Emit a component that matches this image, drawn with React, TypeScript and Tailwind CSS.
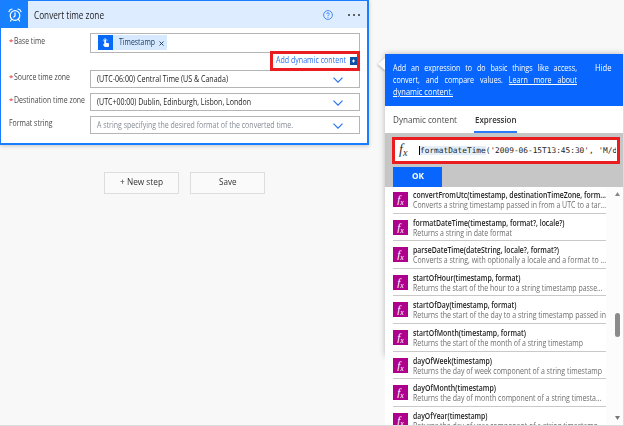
import React, { useLayoutEffect, useRef } from "react";

const functions = [
  { name: "convertFromUtc(timestamp, destinationTimeZone, form...", nameWidth: 193, text: "Converts a string timestamp passed in from a UTC to a tar...", textWidth: 193 },
  { name: "formatDateTime(timestamp, format?, locale?)", nameWidth: 151.5, text: "Returns a string in date format", textWidth: 99 },
  { name: "parseDateTime(dateString, locale?, format?)", nameWidth: 146, text: "Converts a string, with optionally a locale and a format to ...", textWidth: 193 },
  { name: "startOfHour(timestamp, format)", nameWidth: 107.5, text: "Returns the start of the hour to a string timestamp passe...", textWidth: 189.5 },
  { name: "startOfDay(timestamp, format)", nameWidth: 103.5, text: "Returns the start of the day to a string timestamp passed in", textWidth: 193 },
  { name: "startOfMonth(timestamp, format)", nameWidth: 113, text: "Returns the start of the month of a string timestamp", textWidth: 170 },
  { name: "dayOfWeek(timestamp)", nameWidth: 79, text: "Returns the day of week component of a string timestamp", textWidth: 189 },
  { name: "dayOfMonth(timestamp)", nameWidth: 83, text: "Returns the day of month component of a string timesta...", textWidth: 188.5 },
  { name: "dayOfYear(timestamp)", nameWidth: 74.5, text: "Returns the day of year component of a string timestamp", textWidth: 185 },
];

/* Condenses a single line of text to a given width. */
function Fit({ w, className = "", children }: { w: number; className?: string; children: React.ReactNode }) {
  const ref = useRef<HTMLSpanElement>(null);
  useLayoutEffect(() => {
    const el = ref.current;
    if (!el) return;
    el.style.transform = "none";
    el.style.transform = `scaleX(${w / el.getBoundingClientRect().width})`;
  }, [w]);
  return (
    <span className={`flex shrink-0 ${className}`} style={{ width: w }}>
      <span ref={ref} className="block shrink-0 origin-left whitespace-nowrap">{children}</span>
    </span>
  );
}

function Fx({ className }: { className: string }) {
  return (
    <span className={`font-['Liberation_Serif',serif] italic leading-none ${className}`}>
      f<sub className="relative bottom-[-2px] text-[0.72em] leading-none">x</sub>
    </span>
  );
}

function Label({ required, w, children }: { required?: boolean; w: number; children: React.ReactNode }) {
  return (
    <div className="flex w-[81px] shrink-0 text-[8.8px] leading-[12px] text-[#484848]">
      {required && <span className="w-[4.5px] text-[8px] text-[#e5262b]">*</span>}
      <Fit w={w}>{children}</Fit>
    </div>
  );
}

interface SelectRowProps {
  label: string;
  labelWidth: number;
  value: string;
  valueWidth: number;
  required?: boolean;
  placeholder?: boolean;
}

function SelectRow({ label, labelWidth, value, valueWidth, required, placeholder }: SelectRowProps) {
  return (
    <div className="flex h-[18px] items-center">
      <div className="pb-[4px]"><Label required={required} w={labelWidth}>{label}</Label></div>
      <div className={`flex h-[18px] w-[270px] items-center justify-between border border-[#b5b5b5] bg-white pt-px pl-[6px] pr-[16px] text-[8.8px] ${placeholder ? "text-[#858c95]" : "text-[#222]"}`}>
        <Fit w={valueWidth}>{value}</Fit>
        <svg className="h-[6px] w-[10px]" viewBox="0 0 10 6" fill="none" stroke="#2b76ee" strokeWidth="1.2">
          <path d="M.5.7 5 5.2 9.5.7" />
        </svg>
      </div>
    </div>
  );
}

export default function App() {
  return (
    <div className="flex h-[426px] w-[624px] items-start overflow-hidden border-b border-[#dcdcdc] bg-[#f8f8f8] font-['Open_Sans','Noto_Sans',sans-serif]">
      <main className="w-[369px] shrink-0">
        <section className="h-[145px] border-2 border-t border-l border-[#1a7dff] bg-white shadow-[0_1px_4px_#0003]">
          <header className="flex h-[27px] items-center bg-[#deecff]">
            <div className="flex h-[27px] w-[27px] items-center justify-center bg-[#1780ff]">
              <svg className="h-[14px] w-[14px]" viewBox="0 0 14 14" fill="none" stroke="white" strokeWidth="1.2" strokeLinecap="round">
                <circle cx="7" cy="7.5" r="4.8" />
                <path d="M7 4.8v3.1L5.8 9M1 3.7A3.5 3.5 0 0 1 4 1M10 1a3.5 3.5 0 0 1 3 2.7M3.5 11.5 2.5 13M10.5 11.5l1 1.5" />
              </svg>
            </div>
            <h1 className="ml-[6px] flex-1 pt-px text-[10px] text-[#222]"><Fit w={70}>Convert time zone</Fit></h1>
            <svg className="h-[10px] w-[10px]" viewBox="0 0 10 10" fill="none" stroke="#3981f4">
              <circle cx="5" cy="5" r="4.4" strokeWidth=".9" />
              <path d="M3.7 4c0-1.7 2.6-1.7 2.6 0C6.3 5 5 4.9 5 6.1M5 6.9v.8" strokeWidth=".9" />
            </svg>
            <div className="mr-[7px] ml-[15px] flex gap-[3px]">
              <i className="size-[2px] rounded-full bg-[#333]" />
              <i className="size-[2px] rounded-full bg-[#333]" />
              <i className="size-[2px] rounded-full bg-[#333]" />
            </div>
          </header>
          <div className="pt-[5px] pl-[8px]">
            <div className="flex h-[20px] items-start">
              <div className="pt-[2px]"><Label required w={31}>Base time</Label></div>
              <div className="flex h-[20px] w-[270px] items-start border border-[#b5b5b5] pt-px pl-[7px]">
                <div className="flex h-[15px] w-[69px] items-center bg-[#d7e9ff]">
                  <div className="flex size-[15px] items-center justify-center bg-[#0869f7]">
                    <svg className="h-[10px] w-[8px]" viewBox="0 0 9 11" fill="white">
                      <path d="M2.5 5V2.3a1 1 0 0 1 2 0v3l2.8.6c.6.1.8.6.7 1.1L7.5 10H3.2L1 7.4c.4-.8 1.2-.6 1.5-.1Z" />
                      <path d="M1.6 3.6a2.1 2.1 0 1 1 3.8 0" fill="none" stroke="white" strokeWidth=".6" />
                    </svg>
                  </div>
                  <Fit w={36} className="ml-[6px] pt-px text-[8.8px] text-[#16365e]">Timestamp</Fit>
                  <svg className="mt-px ml-[4px] size-[5px]" viewBox="0 0 5 5" stroke="#16365e" strokeWidth=".9"><path d="M.5.5l4 4M4.5.5l-4 4" /></svg>
                </div>
              </div>
            </div>
            <div className="flex h-[17px] justify-end pr-[7px]">
              <div className="relative z-10 mt-[-2px] flex h-[20px] w-[90px] shrink-0 items-center border-[3px] border-[#e91c1f] bg-white pl-[3px]">
                <Fit w={70} className="text-[8.8px] text-[#2b70ee]">Add dynamic content</Fit>
                <svg className="ml-auto h-[8px] w-[7px] shrink-0 bg-[#0b50a5]" viewBox="0 0 7 8" stroke="white"><path d="M2 4h3M3.5 2.5v3" /></svg>
              </div>
            </div>
            <div className="flex flex-col gap-[5px]">
              <SelectRow label="Source time zone" labelWidth={56} required value="(UTC-06:00) Central Time (US & Canada)" valueWidth={131} />
              <SelectRow label="Destination time zone" labelWidth={71} required value="(UTC+00:00) Dublin, Edinburgh, Lisbon, London" valueWidth={154} />
              <SelectRow label="Format string" labelWidth={43.5} value="A string specifying the desired format of the converted time." valueWidth={196} placeholder />
            </div>
          </div>
        </section>
        <div className="mt-[27px] ml-[104px] flex gap-[11px] text-[8.8px] text-[#333]">
          <button className="flex h-[22px] w-[75px] items-center justify-center border border-[#ddd] bg-[#fafafa]"><Fit w={43}>+ New step</Fit></button>
          <button className="flex h-[22px] w-[75px] items-center justify-center border border-[#ddd] bg-[#fafafa]"><Fit w={17.5}>Save</Fit></button>
        </div>
      </main>

      <aside className="relative mt-[54px] ml-[16px] h-[371px] w-[239px] shrink-0">
        <div className="absolute top-0 left-0 h-[302px] w-[238px] shadow-[0_0_6px_#0004]" />
        <svg className="absolute top-[3px] left-[-7px] h-[14px] w-[8px] drop-shadow-[-1px_1px_1px_#0003]" viewBox="0 0 8 14"><path d="M8 0 0 7l8 7Z" fill="white" /></svg>
        <div className="relative flex h-[371px] flex-col border-r border-[#ddd] bg-white">
          <div className="flex h-[52px] shrink-0 bg-[#0866ff] pt-[8px] pl-[8px] text-[8.6px] leading-[12px] text-white">
            <div className="w-[184px]">
              <Fit w={184}><span className="block w-[222px] [text-align-last:justify]">Add an expression to do basic things like access,</span></Fit>
              <Fit w={184}><span className="block w-[222px] [text-align-last:justify]">convert, and compare values. <span className="underline">Learn more about</span></span></Fit>
              <Fit w={60} className="underline">dynamic content.</Fit>
            </div>
            <Fit w={16.5} className="ml-[18px]">Hide</Fit>
          </div>
          <div className="flex h-[27px] shrink-0 pl-[8px] text-[9.5px] text-[#484848]">
            <span className="w-[81px] pt-[7px] leading-[13px]"><Fit w={64}>Dynamic content</Fit></span>
            <span className="h-[27px] w-[43px] border-b-2 border-[#287cf5] pt-[7px] pl-px leading-[13px] font-semibold text-[#333]"><Fit w={41.5}>Expression</Fit></span>
          </div>
          <div className="h-[54px] shrink-0 bg-[#c5c6c5] pt-[4px] pl-[7px]">
            <div className="flex h-[27px] w-[228px] items-center overflow-hidden border-[3px] border-[#e91c1f] bg-white pl-[4px]">
              <Fx className="w-[20px] shrink-0 pb-[2px] text-[14px] text-[#333]" />
              <div className="mr-px overflow-hidden font-['DejaVu_Sans_Mono',monospace] text-[7.8px] leading-[13px] whitespace-pre text-[#222]"><span className="border-l border-black bg-[#e4eef8]">formatDateTime</span>('2009-06-15T13:45:30', 'M/d</div>
            </div>
            <button className="mt-[3px] ml-px flex h-[20px] w-[49px] items-center justify-center bg-[#0866ff] text-[8.8px] font-bold text-white"><Fit w={12}>OK</Fit></button>
          </div>
          <div className="flex min-h-0 flex-1 overflow-hidden">
            <ul className="mt-[-1px] h-[239px] w-[221px] overflow-hidden pl-[8px]">
              {functions.map((fn) => (
                <li key={fn.name} className="flex h-[27.6px] w-[213px] items-start border-b border-[#c9c9c9] pt-[6px]">
                  <div className="flex size-[15px] shrink-0 items-center justify-center bg-[#ad008c]"><Fx className="text-[11px] text-white" /></div>
                  <div className="ml-[4.5px] text-[8.8px] leading-[10px]">
                    <Fit w={fn.nameWidth} className="mt-[-2px] font-semibold text-[#222]">{fn.name}</Fit>
                    <Fit w={fn.textWidth} className="text-[#6d6d6d]">{fn.text}</Fit>
                  </div>
                </li>
              ))}
            </ul>
            <div className="flex w-[17px] flex-col items-center bg-[#fcfcfc] pt-[5px] pb-[5px] pl-[6px]">
              <svg className="h-[4px] w-[5px]" viewBox="0 0 5 4"><path d="M2.5 0 5 4H0Z" fill="#888" /></svg>
              <div className="mt-[117px] h-[24px] w-[5px] rounded-full bg-[#8b8b8b]" />
              <svg className="mt-auto h-[4px] w-[5px]" viewBox="0 0 5 4"><path d="M0 0h5L2.5 4Z" fill="#777" /></svg>
            </div>
          </div>
        </div>
      </aside>
    </div>
  );
}
